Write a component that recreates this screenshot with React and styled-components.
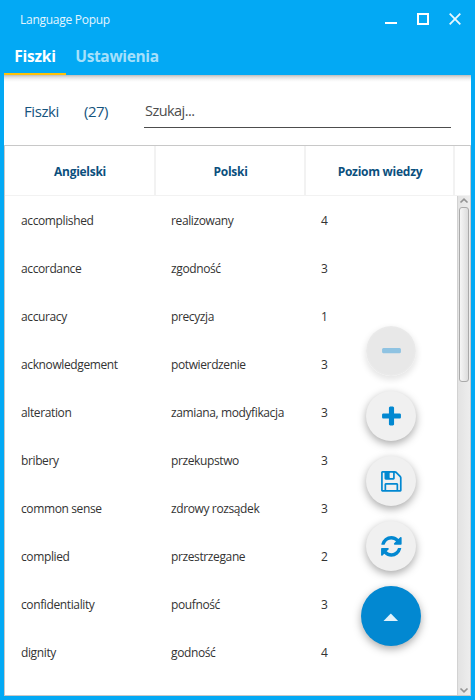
import React from 'react';
import styled, { createGlobalStyle } from 'styled-components';

const GlobalStyle = createGlobalStyle`
  * { box-sizing: border-box; }
  body { margin: 0; background: #03a9f4; font-family: 'Open Sans', 'Noto Sans', sans-serif; }
  button { font: inherit; border: 0; padding: 0; background: none; }
`;

const Window = styled.main`
  width: 475px;
  height: 700px;
  display: flex;
  flex-direction: column;
  overflow: hidden;
  padding: 0 4px 4px;
  background: #03a9f4;
`;

const TitleBar = styled.header`
  height: 38px;
  flex: none;
  display: flex;
  align-items: center;
  justify-content: space-between;
  padding: 0 10px 0 16px;
`;

const Title = styled.h1`
  margin: 0;
  padding-top: 2px;
  font-size: 12px;
  line-height: 18px;
  font-weight: 400;
  letter-spacing: -0.27px;
  color: #e4f5fe;
`;

const WindowControls = styled.div`
  display: flex;
  gap: 20px;
`;

const ControlButton = styled.button`
  width: 12px;
  height: 12px;
  display: block;
  svg { display: block; }
`;

const TabBar = styled.nav`
  height: 37px;
  flex: none;
  display: flex;
`;

const Tab = styled.button`
  height: 37px;
  width: ${(p) => p.$width}px;
  border-bottom: 2px solid ${(p) => (p.$active ? '#ffc107' : 'transparent')};
  color: ${(p) => (p.$active ? '#ffffff' : '#a5e0fb')};
  font-size: 15.5px;
  line-height: 30px;
  font-weight: 700;
  letter-spacing: ${(p) => p.$tracking}px;
  white-space: nowrap;
`;

const Content = styled.section`
  position: relative;
  flex: 1;
  min-height: 0;
  display: flex;
  flex-direction: column;
  background: #fff;
`;

const HeaderShadow = styled.div`
  height: 7px;
  flex: none;
  background: linear-gradient(#bcbcbc, #dedede 30%, #f5f5f5 68%, #fff);
`;

const SearchRow = styled.div`
  height: 63px;
  flex: none;
  display: flex;
  align-items: flex-start;
  padding: 17px 20px 0;
  font-size: 15px;
  line-height: 24px;
`;

const Label = styled.span`
  width: ${(p) => p.$width}px;
  color: #15547e;
  letter-spacing: ${(p) => p.$tracking}px;
`;

const SearchField = styled.div`
  flex: 1;
  height: 29px;
  padding-left: 1px;
  border-bottom: 1px solid #4d4d4d;
  color: #4d4d4d;
  font-size: 14.5px;
  letter-spacing: -0.55px;
`;

const Table = styled.div`
  flex: 1;
  min-height: 0;
  display: flex;
  flex-direction: column;
  border: 1px solid #c8c8c8;
`;

const TableHead = styled.div`
  height: 50px;
  flex: none;
  display: grid;
  grid-template-columns: 151px 150px 149px 1fr;
  border-bottom: 1px solid #f2f2f2;
`;

const HeadCell = styled.div`
  display: flex;
  align-items: center;
  justify-content: center;
  padding: 1px 0 0 1px;
  border-right: 2px solid ${(p) => (p.$last ? 'transparent' : '#f2f2f2')};
  color: #0b4f7d;
  font-size: 12px;
  font-weight: 700;
  letter-spacing: -0.27px;
`;

const TableBody = styled.div`
  flex: 1;
  min-height: 0;
  display: flex;
`;

const Rows = styled.div`
  flex: 1;
  overflow: hidden;
`;

const Row = styled.div`
  height: 48px;
  display: grid;
  grid-template-columns: 150px 150px 1fr;
  align-items: center;
  padding: 1px 0 0 16px;
  font-size: 12px;
  color: #333;
`;

const Cell = styled.span`
  white-space: nowrap;
  letter-spacing: -0.38px;
`;

const ScrollBar = styled.div`
  width: 13px;
  display: flex;
  flex-direction: column;
  align-items: center;
  justify-content: space-between;
  background: linear-gradient(90deg, #d2d2d2 0 1px, #e3e3e3 1px, #ededed);
`;

const ScrollThumb = styled.div`
  width: 10px;
  height: 175px;
  margin: 0 0 auto 1px;
  border: 1px solid #aaa;
  border-radius: 3px;
  background: linear-gradient(90deg, #f6f6f6, #dcdcdc);
`;

const ScrollArrow = styled.svg`
  width: 10px;
  height: 11px;
  flex: none;
  fill: none;
  stroke: #939393;
  stroke-width: 1.7;
`;

const FloatingActions = styled.div`
  position: absolute;
  right: 50px;
  bottom: 50px;
  display: flex;
  flex-direction: column;
  align-items: center;
  gap: 15px;
`;

const ActionButton = styled.button`
  width: ${(p) => (p.$primary ? 60 : 50)}px;
  height: ${(p) => (p.$primary ? 60 : 50)}px;
  display: flex;
  align-items: center;
  justify-content: center;
  border-radius: 50%;
  color: ${(p) => (p.$primary ? '#e1f2fb' : '#0288d1')};
  background: ${(p) => (p.$primary ? '#0288d1' : '#f0f0f0')};
  box-shadow: 0 3px 8px rgba(0, 0, 0, 0.34);
  &:disabled {
    color: #8fc3e2;
    background: radial-gradient(circle, #e8e8e8 64%, #ebebeb 71%);
    box-shadow: 0 3px 6px 1px rgba(0, 0, 0, 0.1);
  }
`;

const Glyph = styled.svg`
  width: 24px;
  height: 24px;
  fill: currentColor;
`;

const glyphs = {
  minus: 'M1600 736v192q0 40-28 68t-68 28h-1216q-40 0-68-28t-28-68v-192q0-40 28-68t68-28h1216q40 0 68 28t28 68z',
  plus: 'M1600 736v192q0 40-28 68t-68 28h-416v416q0 40-28 68t-68 28h-192q-40 0-68-28t-28-68v-416h-416q-40 0-68-28t-28-68v-192q0-40 28-68t68-28h416v-416q0-40 28-68t68-28h192q40 0 68 28t28 68v416h416q40 0 68 28t28 68z',
  save: 'M512 1536h768v-384h-768v384zm896 0h128v-896q0-14-10-38.5t-20-34.5l-281-281q-10-10-34-20t-39-10v416q0 40-28 68t-68 28h-576q-40 0-68-28t-28-68v-416h-128v1280h128v-416q0-40 28-68t68-28h832q40 0 68 28t28 68v416zm-384-928v-320q0-13-9.5-22.5t-22.5-9.5h-192q-13 0-22.5 9.5t-9.5 22.5v320q0 13 9.5 22.5t22.5 9.5h192q13 0 22.5-9.5t9.5-22.5zm640 32v928q0 40-28 68t-68 28h-1344q-40 0-68-28t-28-68v-1344q0-40 28-68t68-28h928q40 0 88 20t76 48l280 280q28 28 48 76t20 88z',
  refresh: 'M1639 1056q0 5-1 7-64 268-268 434.5t-478 166.5q-146 0-282.5-55t-243.5-157l-129 129q-19 19-45 19t-45-19-19-45v-448q0-26 19-45t45-19h448q26 0 45 19t19 45-19 45l-137 137q71 66 161 102t187 36q134 0 250-65t186-179q11-17 53-117 8-23 30-23h192q13 0 22.5 9.5t9.5 22.5zm25-800v448q0 26-19 45t-45 19h-448q-26 0-45-19t-19-45 19-45l138-138q-148-137-349-137-134 0-250 65t-186 179q-11 17-53 117-8 23-30 23h-199q-13 0-22.5-9.5t-9.5-22.5v-7q65-268 270-434.5t480-166.5q146 0 284 55.5t245 156.5l130-129q19-19 45-19t45 19 19 45z',
};

const actions = [
  { name: 'minus', label: 'Usuń', viewBox: '-37 -37 1792 1792', disabled: true },
  { name: 'plus', label: 'Dodaj', viewBox: '-37 -64 1792 1792' },
  { name: 'save', label: 'Zapisz', viewBox: '-26 -26 1792 1792' },
  { name: 'refresh', label: 'Odśwież', viewBox: '-26 -26 1792 1792' },
];

const words = [
  ['accomplished', 'realizowany', 4],
  ['accordance', 'zgodność', 3],
  ['accuracy', 'precyzja', 1],
  ['acknowledgement', 'potwierdzenie', 3],
  ['alteration', 'zamiana, modyfikacja', 3],
  ['bribery', 'przekupstwo', 3],
  ['common sense', 'zdrowy rozsądek', 3],
  ['complied', 'przestrzegane', 2],
  ['confidentiality', 'poufność', 3],
  ['dignity', 'godność', 4],
];

export default function App() {
  return (
    <Window>
      <GlobalStyle />
      <TitleBar>
        <Title>Language Popup</Title>
        <WindowControls>
          <ControlButton aria-label="Minimalizuj">
            <svg width="12" height="12"><path d="M0 10h12" stroke="#fff" strokeWidth="2" /></svg>
          </ControlButton>
          <ControlButton aria-label="Maksymalizuj">
            <svg width="12" height="12"><rect x="1" y="1" width="10" height="10" fill="none" stroke="#fff" strokeWidth="2" /></svg>
          </ControlButton>
          <ControlButton aria-label="Zamknij">
            <svg width="12" height="12"><path d="M.7.7l10.6 10.6M11.3.7L.7 11.3" stroke="#e8f7fe" strokeWidth="1.8" /></svg>
          </ControlButton>
        </WindowControls>
      </TitleBar>
      <TabBar>
        <Tab $active $width={62} $tracking={-0.2}>Fiszki</Tab>
        <Tab $width={102} $tracking={-0.35}>Ustawienia</Tab>
      </TabBar>
      <Content>
        <HeaderShadow />
        <SearchRow>
          <Label $width={60} $tracking={-0.4}>Fiszki</Label>
          <Label $width={60} $tracking={-0.5}>(27)</Label>
          <SearchField>Szukaj...</SearchField>
        </SearchRow>
        <Table>
          <TableHead>
            <HeadCell>Angielski</HeadCell>
            <HeadCell>Polski</HeadCell>
            <HeadCell>Poziom wiedzy</HeadCell>
            <HeadCell $last />
          </TableHead>
          <TableBody>
            <Rows>
              {words.map(([english, polish, level]) => (
                <Row key={english}>
                  <Cell>{english}</Cell>
                  <Cell>{polish}</Cell>
                  <Cell>{level}</Cell>
                </Row>
              ))}
            </Rows>
            <ScrollBar>
              <ScrollArrow viewBox="0 0 10 11"><path d="M1.5 6.5L5 3.2l3.5 3.3" /></ScrollArrow>
              <ScrollThumb />
              <ScrollArrow viewBox="0 0 10 11"><path d="M1.5 4.5L5 7.8l3.5-3.3" /></ScrollArrow>
            </ScrollBar>
          </TableBody>
        </Table>
        <FloatingActions>
          {actions.map(({ name, label, viewBox, disabled }) => (
            <ActionButton key={name} aria-label={label} disabled={disabled}>
              <Glyph viewBox={viewBox}><path d={glyphs[name]} /></Glyph>
            </ActionButton>
          ))}
          <ActionButton $primary aria-label="Menu">
            <Glyph viewBox="0 0 24 24"><path d="M4.5 17L11.5 9.7h.6l7 7.300z" /></Glyph>
          </ActionButton>
        </FloatingActions>
      </Content>
    </Window>
  );
}
